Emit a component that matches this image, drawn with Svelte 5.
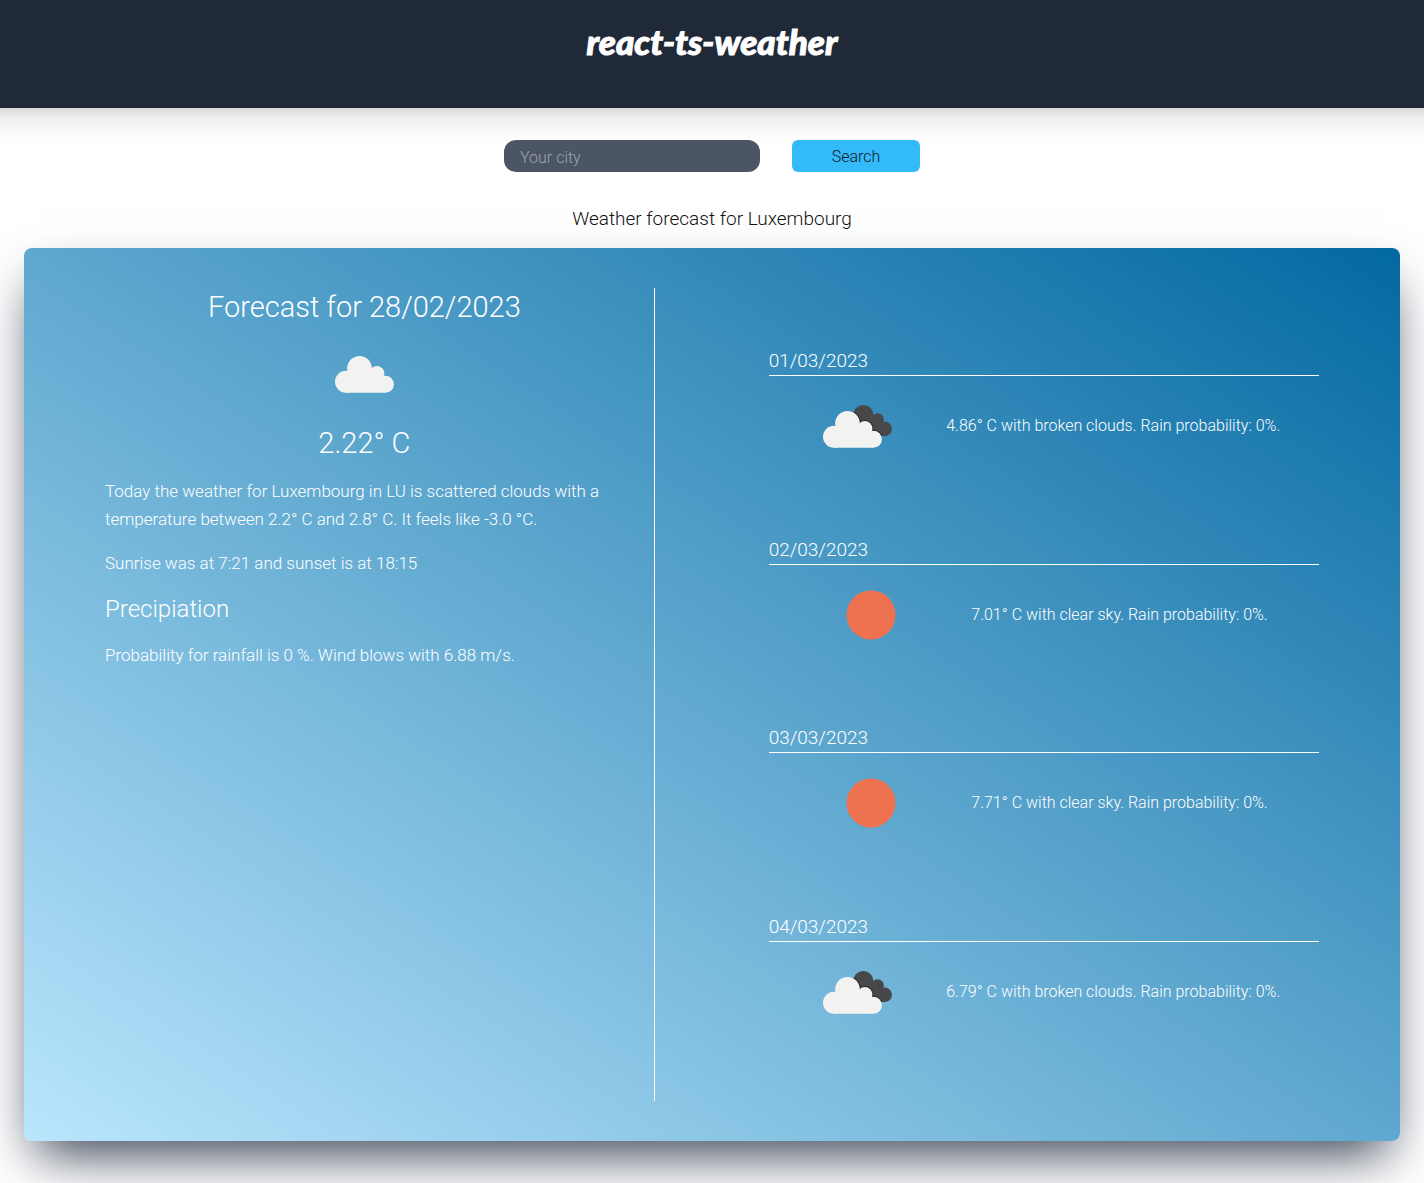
<script>
  let city = $state('');

  const days = [
    { date: '01/03/2023', icon: 'clouds', text: '4.86° C with broken clouds. Rain probability: 0%.' },
    { date: '02/03/2023', icon: 'sun', text: '7.01° C with clear sky. Rain probability: 0%.' },
    { date: '03/03/2023', icon: 'sun', text: '7.71° C with clear sky. Rain probability: 0%.' },
    { date: '04/03/2023', icon: 'clouds', text: '6.79° C with broken clouds. Rain probability: 0%.' }
  ];
</script>

{#snippet cloudShape()}
  <circle cx="32" cy="56.7" r="11" />
  <circle cx="45.5" cy="43.3" r="12.3" />
  <circle cx="62.8" cy="48.7" r="7.6" />
  <circle cx="71.4" cy="59.2" r="8.5" />
  <path d="M32 67.7V50L40 46H60L71 55V67.7Z" />
{/snippet}

{#snippet darkShape()}
  <circle cx="55.3" cy="38.2" r="10.2" />
  <circle cx="69.6" cy="42.6" r="6.3" />
  <circle cx="76.8" cy="51.8" r="7.2" />
  <path d="M50 40H68L77 50V59H60Z" />
{/snippet}

{#snippet weatherIcon(kind)}
  <svg class="icon" viewBox="0 0 100 100" aria-hidden="true">
    {#if kind === 'sun'}
      <circle cx="51" cy="50" r="24.5" fill="#ef7250" />
    {:else if kind === 'clouds'}
      <clipPath id="behind">{@render darkShape()}</clipPath>
      <g transform="translate(1 1)">
        <g fill="#48484a">{@render darkShape()}</g>
        <g clip-path="url(#behind)">
          <g transform="translate(-6 3)" fill="#242426" stroke="#242426" stroke-width="2">{@render cloudShape()}</g>
        </g>
        <g transform="translate(-6 3)" fill="#f2f2f0">{@render cloudShape()}</g>
      </g>
    {:else}
      <g fill="#f2f2f0">{@render cloudShape()}</g>
    {/if}
  </svg>
{/snippet}

<header>
  <h1>react-ts-weather</h1>
</header>

<main>
  <form onsubmit={(e) => e.preventDefault()}>
    <input type="text" placeholder="Your city" aria-label="Your city" bind:value={city} />
    <button type="submit">Search</button>
  </form>

  <h2 class="place">Weather forecast for Luxembourg</h2>

  <div class="card">
    <section class="today">
      <h2>Forecast for 28/02/2023</h2>
      {@render weatherIcon('cloud')}
      <div class="temp">2.22° C</div>
      <p>
        Today the weather for Luxembourg in LU is scattered clouds with a temperature between 2.2° C
        and 2.8° C. It feels like -3.0 °C.
      </p>
      <p>Sunrise was at 7:21 and sunset is at 18:15</p>
      <h3>Precipiation</h3>
      <p>Probability for rainfall is 0 %. Wind blows with 6.88 m/s.</p>
    </section>

    <section class="days">
      {#each days as day}
        <article>
          <h3>{day.date}</h3>
          <div class="row">
            {@render weatherIcon(day.icon)}
            <span>{day.text}</span>
          </div>
        </article>
      {/each}
    </section>
  </div>
</main>

<style>
  :global(body) {
    background: #fff;
    font-family: Roboto, 'Liberation Sans', sans-serif;
    font-weight: 300;
  }

  h1,
  h2,
  h3,
  p {
    margin: 0;
    font-weight: 300;
  }

  header {
    padding: 21px 24px 47px;
    background: #1f2937;
    box-shadow:
      0 -5px 25px 20px rgb(0 0 0 / 0.1),
      0 -8px 10px 10px rgb(0 0 0 / 0.1);
    text-align: center;
  }

  h1 {
    color: #fff;
    font-family: Lato, sans-serif;
    font-size: 35px;
    font-style: italic;
    font-weight: 900;
    line-height: 40px;
    -webkit-text-stroke: 1px #fff;
  }

  main {
    padding: 32px 24px 42px;
  }

  form {
    display: flex;
    justify-content: center;
    gap: 32px;
  }

  input,
  button {
    box-sizing: border-box;
    height: 32px;
    border: 0;
    font: inherit;
    font-size: 16px;
  }

  input {
    width: 256px;
    padding: 2px 16px 0;
    border-radius: 12px;
    background: #4b5563;
    color: #fff;
  }

  input::placeholder {
    color: #9ca3af;
    opacity: 1;
  }

  button {
    width: 128px;
    border-radius: 6px;
    background: #33baf8;
    color: #111827;
  }

  .place {
    padding: 33px 0 15px;
    color: #111;
    font-size: 19px;
    line-height: 28px;
    text-align: center;
  }

  .card {
    display: grid;
    grid-template-columns: 11fr 13fr;
    box-sizing: border-box;
    min-height: calc(100vh - 290px);
    padding: 40px 0;
    border-radius: 8px;
    background: linear-gradient(to top right, #bae6fd, #0369a1);
    box-shadow: 0 25px 50px -12px #374151;
    color: #fff;
  }

  .today {
    display: flex;
    flex-direction: column;
    gap: 16px;
    padding: 1px 30px 0 81px;
    border-right: 1px solid #fff;
    font-size: 17px;
    line-height: 28px;
  }

  .today h2,
  .temp {
    font-size: 29px;
    line-height: 36px;
    text-align: center;
  }

  .today h3 {
    font-size: 24px;
    line-height: 32px;
  }

  .icon {
    flex: none;
    width: 100px;
    height: 100px;
  }

  .today .icon {
    align-self: center;
    margin: -16px 0;
  }

  .days {
    display: flex;
    flex-direction: column;
    justify-content: space-evenly;
    padding: 0 81px 0 114px;
  }

  .days h3 {
    border-bottom: 1px solid #fff;
    font-size: 19px;
    line-height: 28px;
  }

  .row {
    display: flex;
    align-items: center;
    justify-content: space-evenly;
    font-size: 16px;
    line-height: 24px;
  }
</style>
